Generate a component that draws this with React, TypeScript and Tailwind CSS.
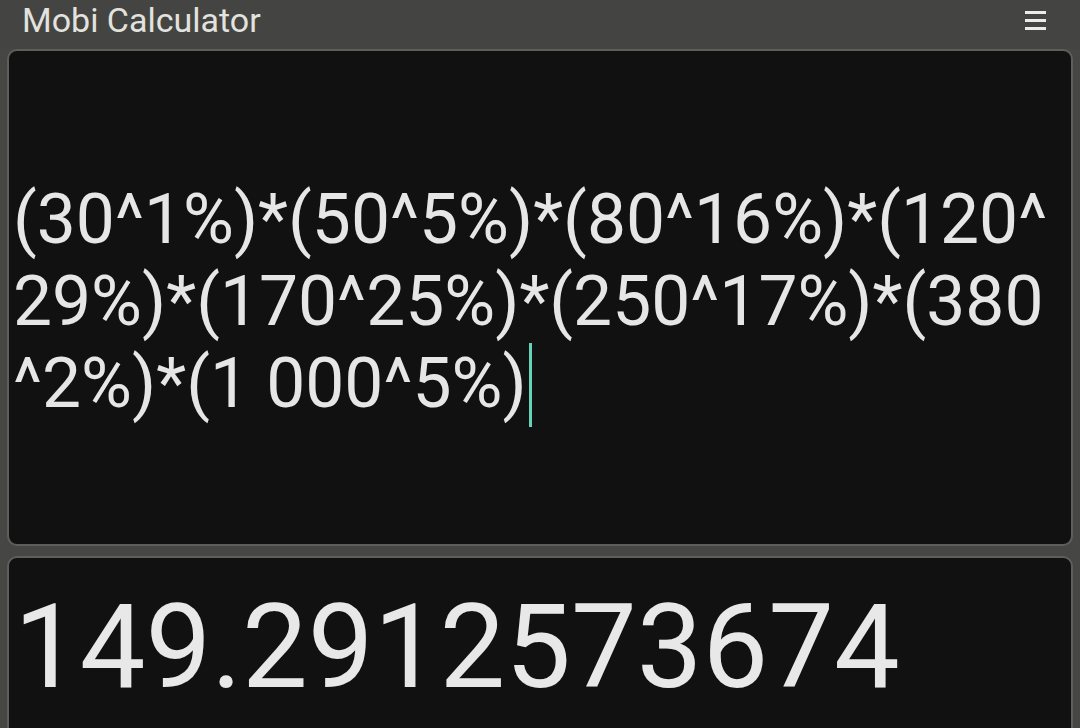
export default function App() {
  const expression = '(30^1%)*(50^5%)*(80^16%)*(120^29%)*(170^25%)*(250^17%)*(380^2%)*(1 000^5%)';
  const result = '149.2912573674';

  return (
    <div className="h-[728px] w-[1080px] overflow-hidden bg-[#464644] font-['Roboto',sans-serif]">
      {/* header */}
      <div className="flex h-[49px] items-start justify-between bg-[#444442] pl-[22px] pr-[34px]">
        <h1 className="pt-[3px] text-[34px] leading-none font-normal text-[#e2e2de]">Mobi Calculator</h1>
        <button className="mt-[11px] flex w-[21px] flex-col gap-[5px]">
          <span className="h-[3px] w-full bg-[#ececea]" />
          <span className="h-[3px] w-full bg-[#ececea]" />
          <span className="h-[3px] w-full bg-[#ececea]" />
        </button>
      </div>

      <div className="flex flex-col gap-[10px] px-[7px]">
        {/* expression */}
        <div className="flex h-[497px] flex-col justify-center rounded-[10px] border-2 border-[#5e5e5a] bg-[#111111] pt-[10px] pl-[4px]">
          <p className="w-[1045px] text-[69.5px] leading-[82px] break-all text-[#e6e6e6]">
            {expression}
            <span className="ml-[2px] inline-block h-[84px] w-[3px] bg-[#66d2b8] align-top" />
          </p>
        </div>

        {/* result */}
        <div className="h-[220px] rounded-[10px] border-2 border-[#5e5e5a] bg-[#111111] pt-[31px] pl-[5px]">
          <p className="text-[117px] leading-none text-[#e8e8e8]">{result}</p>
        </div>
      </div>
    </div>
  );
}
